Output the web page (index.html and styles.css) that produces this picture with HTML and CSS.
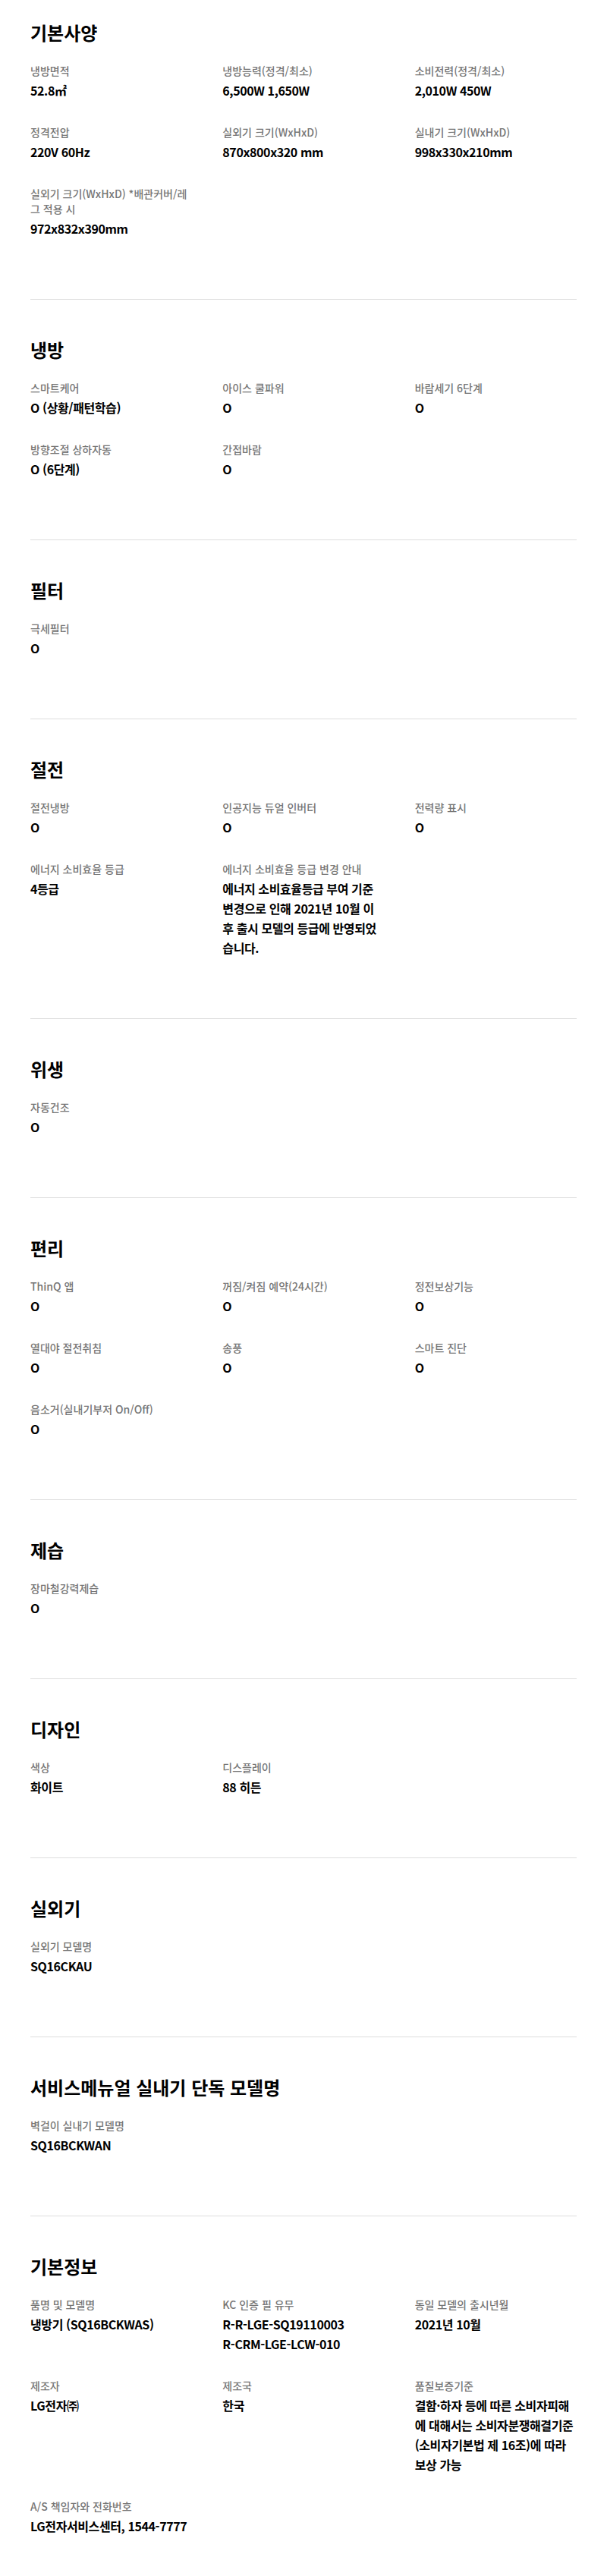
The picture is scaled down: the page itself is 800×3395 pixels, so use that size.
FILE: index.html
```html
<!DOCTYPE html>
<html lang="ko">
<head>
<meta charset="utf-8">
<title>스펙</title>
<link rel="stylesheet" href="styles.css">
</head>
<body>
<main class="specs">

<section class="spec-section first">
  <h2 class="spec-title">기본사양</h2>
  <dl class="spec-grid">
    <div class="spec-item"><dt>냉방면적</dt><dd>52.8㎡</dd></div>
    <div class="spec-item"><dt>냉방능력(정격/최소)</dt><dd>6,500W 1,650W</dd></div>
    <div class="spec-item"><dt>소비전력(정격/최소)</dt><dd>2,010W 450W</dd></div>
    <div class="spec-item"><dt>정격전압</dt><dd>220V 60Hz</dd></div>
    <div class="spec-item"><dt>실외기 크기(WxHxD)</dt><dd>870x800x320 mm</dd></div>
    <div class="spec-item"><dt>실내기 크기(WxHxD)</dt><dd>998x330x210mm</dd></div>
    <div class="spec-item"><dt>실외기 크기(WxHxD) *배관커버/레그 적용 시</dt><dd>972x832x390mm</dd></div>
  </dl>
</section>

<section class="spec-section">
  <h2 class="spec-title">냉방</h2>
  <dl class="spec-grid">
    <div class="spec-item"><dt>스마트케어</dt><dd>O (상황/패턴학습)</dd></div>
    <div class="spec-item"><dt>아이스 쿨파워</dt><dd>O</dd></div>
    <div class="spec-item"><dt>바람세기 6단계</dt><dd>O</dd></div>
    <div class="spec-item"><dt>방향조절 상하자동</dt><dd>O (6단계)</dd></div>
    <div class="spec-item"><dt>간접바람</dt><dd>O</dd></div>
  </dl>
</section>

<section class="spec-section">
  <h2 class="spec-title">필터</h2>
  <dl class="spec-grid">
    <div class="spec-item"><dt>극세필터</dt><dd>O</dd></div>
  </dl>
</section>

<section class="spec-section">
  <h2 class="spec-title">절전</h2>
  <dl class="spec-grid">
    <div class="spec-item"><dt>절전냉방</dt><dd>O</dd></div>
    <div class="spec-item"><dt>인공지능 듀얼 인버터</dt><dd>O</dd></div>
    <div class="spec-item"><dt>전력량 표시</dt><dd>O</dd></div>
    <div class="spec-item"><dt>에너지 소비효율 등급</dt><dd>4등급</dd></div>
    <div class="spec-item"><dt>에너지 소비효율 등급 변경 안내</dt><dd>에너지 소비효율등급 부여 기준 변경으로 인해 2021년 10월 이후 출시 모델의 등급에 반영되었습니다.</dd></div>
  </dl>
</section>

<section class="spec-section">
  <h2 class="spec-title">위생</h2>
  <dl class="spec-grid">
    <div class="spec-item"><dt>자동건조</dt><dd>O</dd></div>
  </dl>
</section>

<section class="spec-section">
  <h2 class="spec-title">편리</h2>
  <dl class="spec-grid">
    <div class="spec-item"><dt>ThinQ 앱</dt><dd>O</dd></div>
    <div class="spec-item"><dt>꺼짐/켜짐 예약(24시간)</dt><dd>O</dd></div>
    <div class="spec-item"><dt>정전보상기능</dt><dd>O</dd></div>
    <div class="spec-item"><dt>열대야 절전취침</dt><dd>O</dd></div>
    <div class="spec-item"><dt>송풍</dt><dd>O</dd></div>
    <div class="spec-item"><dt>스마트 진단</dt><dd>O</dd></div>
    <div class="spec-item"><dt>음소거(실내기부저 On/Off)</dt><dd>O</dd></div>
  </dl>
</section>

<section class="spec-section">
  <h2 class="spec-title">제습</h2>
  <dl class="spec-grid">
    <div class="spec-item"><dt>장마철강력제습</dt><dd>O</dd></div>
  </dl>
</section>

<section class="spec-section">
  <h2 class="spec-title">디자인</h2>
  <dl class="spec-grid">
    <div class="spec-item"><dt>색상</dt><dd>화이트</dd></div>
    <div class="spec-item"><dt>디스플레이</dt><dd>88 히든</dd></div>
  </dl>
</section>

<section class="spec-section">
  <h2 class="spec-title">실외기</h2>
  <dl class="spec-grid">
    <div class="spec-item"><dt>실외기 모델명</dt><dd>SQ16CKAU</dd></div>
  </dl>
</section>

<section class="spec-section">
  <h2 class="spec-title">서비스메뉴얼 실내기 단독 모델명</h2>
  <dl class="spec-grid">
    <div class="spec-item"><dt>벽걸이 실내기 모델명</dt><dd>SQ16BCKWAN</dd></div>
  </dl>
</section>

<section class="spec-section last">
  <h2 class="spec-title">기본정보</h2>
  <dl class="spec-grid">
    <div class="spec-item"><dt>품명 및 모델명</dt><dd>냉방기 (SQ16BCKWAS)</dd></div>
    <div class="spec-item"><dt>KC 인증 필 유무</dt><dd>R-R-LGE-SQ19110003<br>R-CRM-LGE-LCW-010</dd></div>
    <div class="spec-item"><dt>동일 모델의 출시년월</dt><dd>2021년 10월</dd></div>
    <div class="spec-item"><dt>제조자</dt><dd>LG전자㈜</dd></div>
    <div class="spec-item"><dt>제조국</dt><dd>한국</dd></div>
    <div class="spec-item"><dt>품질보증기준</dt><dd>결함·하자 등에 따른 소비자피해에 대해서는 소비자분쟁해결기준(소비자기본법 제 16조)에 따라 보상 가능</dd></div>
    <div class="spec-item"><dt>A/S 책임자와 전화번호</dt><dd class="nowrap">LG전자서비스센터, 1544-7777</dd></div>
  </dl>
</section>

</main>
</body>
</html>
```

FILE: styles.css
```css
html, body {
  margin: 0;
  padding: 0;
  background: #ffffff;
}

body {
  font-family: "Noto Sans CJK KR", "Noto Sans", sans-serif;
  color: #000000;
}

.specs {
  padding: 0 40px;
}

.spec-section {
  padding: 50px 0 80px;
  border-bottom: 1px solid #dddddd;
}

.spec-section.first {
  padding-top: 27px;
}

.spec-section.last {
  border-bottom: none;
}

.spec-title {
  margin: 0 0 24px;
  font-size: 24px;
  line-height: 32px;
  font-weight: 700;
  color: #000000;
}

.spec-grid {
  margin: 0;
  display: grid;
  grid-template-columns: repeat(3, 1fr);
  column-gap: 40px;
  row-gap: 32px;
}

.spec-item {
  min-width: 0;
}

.spec-item dt {
  font-size: 14px;
  line-height: 20px;
  font-weight: 500;
  color: #767676;
  word-break: break-all;
}

.spec-item dd {
  margin: 3px 0 0;
  font-size: 16px;
  line-height: 26px;
  font-weight: 700;
  color: #000000;
  letter-spacing: -0.4px;
  word-break: break-all;
}

.spec-item dd.nowrap {
  white-space: nowrap;
}
```
